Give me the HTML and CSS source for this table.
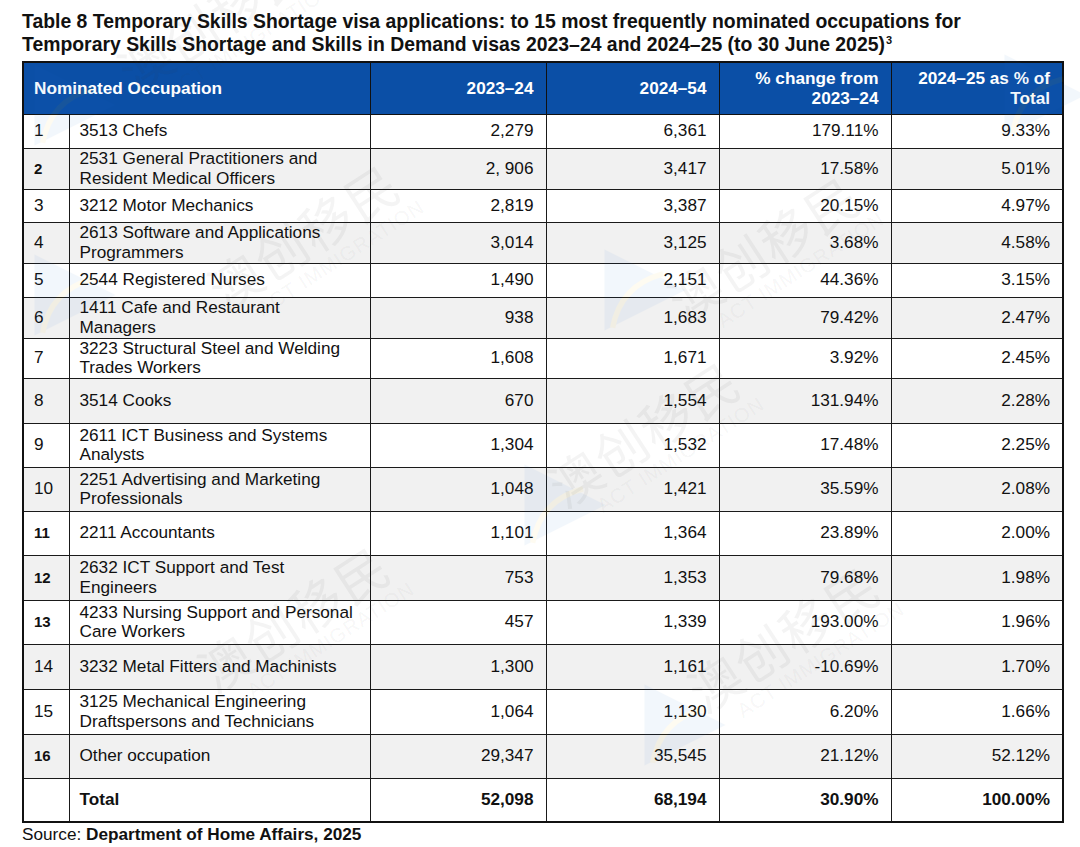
FILE: index.html
```html
<!DOCTYPE html>
<html lang="en">
<head>
<meta charset="utf-8">
<title>Table 8 Temporary Skills Shortage visa applications</title>
<link rel="stylesheet" href="styles.css">
</head>
<body>
<div class="page">
  <h1 class="title">Table 8 Temporary Skills Shortage visa applications: to 15 most frequently nominated occupations for Temporary Skills Shortage and Skills in Demand visas 2023–24 and 2024–25 (to 30 June 2025)<sup>3</sup></h1>
  <table class="data">
    <colgroup>
      <col class="c-num"><col class="c-occ"><col class="c-v1"><col class="c-v2"><col class="c-v3"><col class="c-v4">
    </colgroup>
    <thead>
      <tr class="head">
        <th colspan="2" class="left">Nominated Occupation</th>
        <th>2023–24</th>
        <th>2024–54</th>
        <th>% change from<br>2023–24</th>
        <th>2024–25 as % of<br>Total</th>
      </tr>
    </thead>
    <tbody>
      <tr class="h34"><td class="n">1</td><td class="o">3513 Chefs</td><td>2,279</td><td>6,361</td><td>179.11%</td><td>9.33%</td></tr>
      <tr class="h41 alt"><td class="n b">2</td><td class="o">2531 General Practitioners and Resident Medical Officers</td><td>2, 906</td><td>3,417</td><td>17.58%</td><td>5.01%</td></tr>
      <tr class="h33"><td class="n">3</td><td class="o">3212 Motor Mechanics</td><td>2,819</td><td>3,387</td><td>20.15%</td><td>4.97%</td></tr>
      <tr class="h41 alt"><td class="n">4</td><td class="o">2613 Software and Applications Programmers</td><td>3,014</td><td>3,125</td><td>3.68%</td><td>4.58%</td></tr>
      <tr class="h34"><td class="n">5</td><td class="o">2544 Registered Nurses</td><td>1,490</td><td>2,151</td><td>44.36%</td><td>3.15%</td></tr>
      <tr class="h41 alt"><td class="n">6</td><td class="o">1411 Cafe and Restaurant Managers</td><td>938</td><td>1,683</td><td>79.42%</td><td>2.47%</td></tr>
      <tr class="h39"><td class="n">7</td><td class="o">3223 Structural Steel and Welding Trades Workers</td><td>1,608</td><td>1,671</td><td>3.92%</td><td>2.45%</td></tr>
      <tr class="h45 alt"><td class="n">8</td><td class="o">3514 Cooks</td><td>670</td><td>1,554</td><td>131.94%</td><td>2.28%</td></tr>
      <tr class="h44"><td class="n">9</td><td class="o">2611 ICT Business and Systems Analysts</td><td>1,304</td><td>1,532</td><td>17.48%</td><td>2.25%</td></tr>
      <tr class="h44 alt"><td class="n">10</td><td class="o">2251 Advertising and Marketing Professionals</td><td>1,048</td><td>1,421</td><td>35.59%</td><td>2.08%</td></tr>
      <tr class="h44"><td class="n b">11</td><td class="o">2211 Accountants</td><td>1,101</td><td>1,364</td><td>23.89%</td><td>2.00%</td></tr>
      <tr class="h45 alt"><td class="n b">12</td><td class="o">2632 ICT Support and Test Engineers</td><td>753</td><td>1,353</td><td>79.68%</td><td>1.98%</td></tr>
      <tr class="h44"><td class="n b">13</td><td class="o">4233 Nursing Support and Personal Care Workers</td><td>457</td><td>1,339</td><td>193.00%</td><td>1.96%</td></tr>
      <tr class="h45 alt"><td class="n">14</td><td class="o">3232 Metal Fitters and Machinists</td><td>1,300</td><td>1,161</td><td>-10.69%</td><td>1.70%</td></tr>
      <tr class="h45"><td class="n">15</td><td class="o">3125 Mechanical Engineering Draftspersons and Technicians</td><td>1,064</td><td>1,130</td><td>6.20%</td><td>1.66%</td></tr>
      <tr class="h44 alt"><td class="n b">16</td><td class="o">Other occupation</td><td>29,347</td><td>35,545</td><td>21.12%</td><td>52.12%</td></tr>
      <tr class="h44 total"><td class="n"></td><td class="o">Total</td><td>52,098</td><td>68,194</td><td>30.90%</td><td>100.00%</td></tr>
    </tbody>
  </table>
  <p class="source">Source: <strong>Department of Home Affairs, 2025</strong></p>
</div>

<div class="watermarks" aria-hidden="true">
  <div class="wm wm-a"><span class="wm-cn">澳创移民</span><span class="wm-en">ACT IMMIGRATION</span></div>
  <div class="wm wm-b"><span class="wm-cn">澳创移民</span><span class="wm-en">ACT IMMIGRATION</span></div>
  <div class="wm wm-c"><span class="wm-cn">澳创移民</span><span class="wm-en">ACT IMMIGRATION</span></div>
  <div class="wm wm-d"><span class="wm-cn">澳创移民</span><span class="wm-en">ACT IMMIGRATION</span></div>
  <div class="wm wm-e"><span class="wm-cn">澳创移民</span><span class="wm-en">ACT IMMIGRATION</span></div>
  <div class="wm wm-f"><span class="wm-cn">澳创移民</span><span class="wm-en">ACT IMMIGRATION</span></div>

  <svg class="tri tri-1" viewBox="0 0 100 100"><path d="M5 5 L95 50 L5 95 Z" fill="#1f6fd0"/><path d="M14 92 C20 60 40 40 70 32" stroke="#f5c400" stroke-width="6" fill="none"/></svg>
  <svg class="tri tri-2" viewBox="0 0 100 100"><path d="M5 5 L95 50 L5 95 Z" fill="#1f6fd0"/><path d="M14 92 C20 60 40 40 70 32" stroke="#f5c400" stroke-width="6" fill="none"/></svg>
  <svg class="tri tri-3" viewBox="0 0 100 100"><path d="M5 5 L95 50 L5 95 Z" fill="#1f6fd0"/><path d="M14 92 C20 60 40 40 70 32" stroke="#f5c400" stroke-width="6" fill="none"/></svg>
  <svg class="tri tri-4" viewBox="0 0 100 100"><path d="M5 5 L95 50 L5 95 Z" fill="#1f6fd0"/><path d="M14 92 C20 60 40 40 70 32" stroke="#f5c400" stroke-width="6" fill="none"/></svg>
  <svg class="tri tri-5" viewBox="0 0 100 100"><path d="M5 5 L95 50 L5 95 Z" fill="#1f6fd0"/><path d="M14 92 C20 60 40 40 70 32" stroke="#f5c400" stroke-width="6" fill="none"/></svg>
  <svg class="tri tri-6" viewBox="0 0 100 100"><path d="M5 5 L95 50 L5 95 Z" fill="#1f6fd0"/><path d="M14 92 C20 60 40 40 70 32" stroke="#f5c400" stroke-width="6" fill="none"/></svg>
</div>
</body>
</html>
```

FILE: styles.css
```css
html, body {
  margin: 0;
  padding: 0;
  background: #ffffff;
}
body {
  position: relative;
  overflow: hidden;
  height: 847px;
}
.page {
  padding: 10px 18px 0 22px;
  font-family: "Liberation Sans", Arial, sans-serif;
  color: #111111;
}
.title {
  margin: 0 0 5px 0;
  font-size: 19.4px;
  line-height: 23px;
  font-weight: bold;
  color: #111111;
  max-width: 1000px;
}
.title sup {
  font-size: 11px;
  line-height: 1;
  vertical-align: super;
  margin-left: 1px;
}
.data {
  border-collapse: collapse;
  table-layout: fixed;
  width: 1040px;
  border: 2px solid #111111;
  font-size: 17.2px;
}
.c-num { width: 46px; }
.c-occ { width: 301px; }
.c-v1 { width: 176px; }
.c-v2 { width: 173px; }
.c-v3 { width: 172px; }
.c-v4 { width: 172px; }
.data th, .data td {
  border: 1.5px solid #1a1a1a;
  padding: 0 12px 0 10px;
  text-align: right;
  vertical-align: middle;
  line-height: 19.5px;
}
.head { height: 52px; }
.head th {
  background: #0b4fa6;
  color: #ffffff;
  font-weight: bold;
  line-height: 20px;
  border-color: #111111;
}
.head th.left { text-align: left; }
.data td.n { text-align: left; }
.data td.o { text-align: left; padding-right: 13px; }
.data td.b { font-weight: bold; font-size: 15px; }
.alt td { background: #f1f1f1; }
.total td { font-weight: bold; }
.h33 { height: 33px; }
.h34 { height: 34px; }
.h39 { height: 39px; }
.h41 { height: 41px; }
.h44 { height: 44px; }
.h45 { height: 45px; }
.source {
  margin: 1px 0 0 0;
  font-size: 17.2px;
  line-height: 20px;
}

/* faint watermark overlay */
.watermarks {
  position: absolute;
  inset: 0;
  pointer-events: none;
  overflow: hidden;
}
.wm {
  position: absolute;
  display: flex;
  flex-direction: column;
  align-items: flex-start;
  transform: rotate(-33deg);
  transform-origin: left bottom;
  color: rgba(60, 60, 60, 0.055);
  font-family: "Noto Sans CJK SC", "Liberation Sans", sans-serif;
  white-space: nowrap;
}
.wm-cn {
  font-size: 52px;
  line-height: 56px;
  letter-spacing: 2px;
}
.wm-en {
  font-family: "Liberation Sans", Arial, sans-serif;
  font-size: 20px;
  line-height: 22px;
  letter-spacing: 1px;
  margin-left: 30px;
}
.wm-a { left: 150px; top: 40px; }
.wm-b { left: 240px; top: 258px; }
.wm-c { left: 700px; top: 270px; }
.wm-d { left: 580px; top: 455px; }
.wm-e { left: 230px; top: 640px; }
.wm-f { left: 720px; top: 660px; }
.tri {
  position: absolute;
  width: 90px;
  height: 90px;
  opacity: 0.05;
}
.tri-1 { left: 30px; top: 60px; }
.tri-2 { left: 1000px; top: 50px; }
.tri-3 { left: 30px; top: 250px; }
.tri-4 { left: 600px; top: 245px; }
.tri-5 { left: 520px; top: 460px; }
.tri-6 { left: 640px; top: 680px; }
```
